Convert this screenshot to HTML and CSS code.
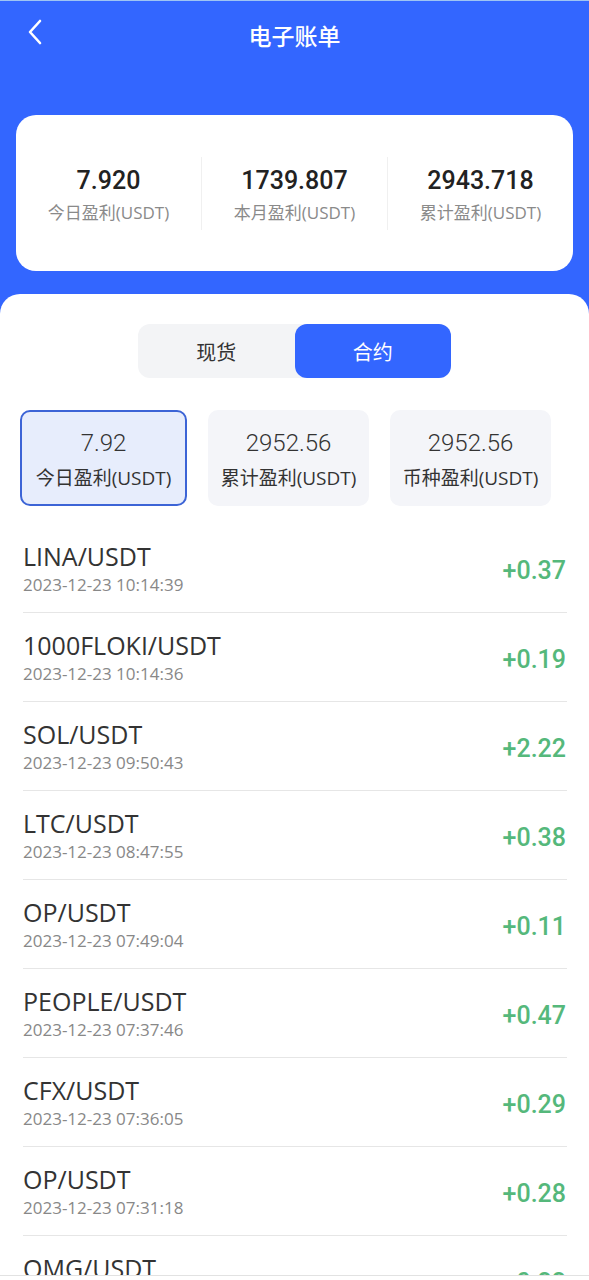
FILE: index.html
```html
<!DOCTYPE html>
<html lang="zh-CN">
<head>
    <meta charset="UTF-8">
    <meta name="viewport" content="width=device-width, initial-scale=1.0">
    <title>电子账单</title>
    <link rel="stylesheet" href="styles.css">
</head>
<body>
<div class="page">
    <div class="head">
        <div class="nav">
            <span class="back">
                <svg width="16" height="26" viewBox="0 0 16 26"><path d="M13 2 L3 13 L13 24" fill="none" stroke="#fff" stroke-width="2.6" stroke-linecap="round" stroke-linejoin="round"/></svg>
            </span>
            <span class="title">电子账单</span>
        </div>
        <div class="summary">
            <div class="sum-col">
                <div class="sum-num">7.920</div>
                <div class="sum-label">今日盈利(USDT)</div>
            </div>
            <div class="sum-col">
                <div class="sum-num">1739.807</div>
                <div class="sum-label">本月盈利(USDT)</div>
            </div>
            <div class="sum-col">
                <div class="sum-num">2943.718</div>
                <div class="sum-label">累计盈利(USDT)</div>
            </div>
        </div>
    </div>

    <div class="panel">
        <div class="tabs">
            <div class="tab">现货</div>
            <div class="tab active">合约</div>
        </div>

        <div class="stats">
            <div class="stat active">
                <div class="stat-num">7.92</div>
                <div class="stat-label">今日盈利(USDT)</div>
            </div>
            <div class="stat">
                <div class="stat-num">2952.56</div>
                <div class="stat-label">累计盈利(USDT)</div>
            </div>
            <div class="stat">
                <div class="stat-num">2952.56</div>
                <div class="stat-label">币种盈利(USDT)</div>
            </div>
        </div>

        <ul class="list">
            <li class="row"><div><div class="pair">LINA/USDT</div><div class="time">2023-12-23 10:14:39</div></div><div class="amount">+0.37</div></li>
            <li class="row"><div><div class="pair">1000FLOKI/USDT</div><div class="time">2023-12-23 10:14:36</div></div><div class="amount">+0.19</div></li>
            <li class="row"><div><div class="pair">SOL/USDT</div><div class="time">2023-12-23 09:50:43</div></div><div class="amount">+2.22</div></li>
            <li class="row"><div><div class="pair">LTC/USDT</div><div class="time">2023-12-23 08:47:55</div></div><div class="amount">+0.38</div></li>
            <li class="row"><div><div class="pair">OP/USDT</div><div class="time">2023-12-23 07:49:04</div></div><div class="amount">+0.11</div></li>
            <li class="row"><div><div class="pair">PEOPLE/USDT</div><div class="time">2023-12-23 07:37:46</div></div><div class="amount">+0.47</div></li>
            <li class="row"><div><div class="pair">CFX/USDT</div><div class="time">2023-12-23 07:36:05</div></div><div class="amount">+0.29</div></li>
            <li class="row"><div><div class="pair">OP/USDT</div><div class="time">2023-12-23 07:31:18</div></div><div class="amount">+0.28</div></li>
            <li class="row"><div><div class="pair">OMG/USDT</div><div class="time">2023-12-23 07:20:51</div></div><div class="amount">+0.22</div></li>
        </ul>
    </div>
</div>
</body>
</html>
```

FILE: styles.css
```css
*{
    margin: 0;
    padding: 0;
    box-sizing: border-box;
}
body{
    font-family: "Open Sans", "Noto Sans CJK SC", sans-serif;
    color: #333;
    background: #fff;
}
.page{
    height: 1276px;
    overflow: hidden;
    border-bottom: 1px solid #e2e2e2;
}
.head{
    background: #3366ff;
    border-top: 1px solid #9fc4f3;
    padding: 0 16px 43px;
}
.nav{
    height: 67px;
    display: flex;
    align-items: center;
    justify-content: center;
    position: relative;
}
.back{
    position: absolute;
    left: 11px;
    top: 18px;
}
.title{
    color: #fff;
    font-family: "Noto Sans CJK SC", sans-serif;
    font-size: 23px;
    font-weight: 500;
}
.summary{
    margin-top: 47px;
    height: 156px;
    background: #fff;
    border-radius: 20px;
    display: flex;
    align-items: center;
}
.sum-col{
    flex: 1;
    height: 73px;
    display: flex;
    flex-direction: column;
    align-items: center;
    justify-content: center;
    gap: 6px;
    padding-top: 4px;
}
.sum-col + .sum-col{
    border-left: 1px solid #f0f0f0;
}
.sum-num{
    font-family: Roboto, sans-serif;
    font-size: 25px;
    font-weight: 500;
    line-height: 30px;
    color: #222;
}
.sum-label{
    font-size: 17px;
    line-height: 22px;
    color: #8a8a8a;
}
.panel{
    background: #fff;
    margin-top: -20px;
    border-radius: 20px 20px 0 0;
    padding-top: 30px;
}
.tabs{
    width: 313px;
    height: 54px;
    margin: 0 auto;
    display: flex;
    background: #f3f4f6;
    border-radius: 12px;
}
.tab{
    flex: 1;
    display: flex;
    align-items: center;
    justify-content: center;
    font-family: "Noto Sans CJK SC", sans-serif;
    font-size: 20px;
    color: #333;
    border-radius: 12px;
}
.tab.active{
    background: #3366ff;
    color: #fff;
}
.stats{
    display: flex;
    gap: 21px;
    padding-left: 20px;
    margin-top: 32px;
}
.stat{
    width: 161px;
    height: 96px;
    background: #f4f5f9;
    border-radius: 10px;
    display: flex;
    flex-direction: column;
    align-items: center;
    justify-content: center;
    gap: 9px;
    padding-top: 2px;
}
.stat.active{
    width: 167px;
    background: #e7edfc;
    border: 2px solid #3c64d6;
}
.stat-num{
    font-family: Roboto, sans-serif;
    font-size: 24px;
    font-weight: 300;
    line-height: 28px;
    color: #333;
}
.stat-label{
    font-size: 19px;
    line-height: 24px;
    color: #333;
}
.list{
    list-style: none;
    margin: 18px 22px 0 23px;
}
.row{
    display: flex;
    justify-content: space-between;
    align-items: center;
    padding: 17px 1px 13px 0;
    border-bottom: 1px solid #e6e6e6;
}
.pair{
    font-size: 25px;
    line-height: 30px;
    color: #333;
}
.time{
    font-size: 17px;
    line-height: 28px;
    color: #888;
}
.amount{
    font-family: Roboto, sans-serif;
    font-size: 25px;
    font-weight: 500;
    color: #55b87b;
}
```
